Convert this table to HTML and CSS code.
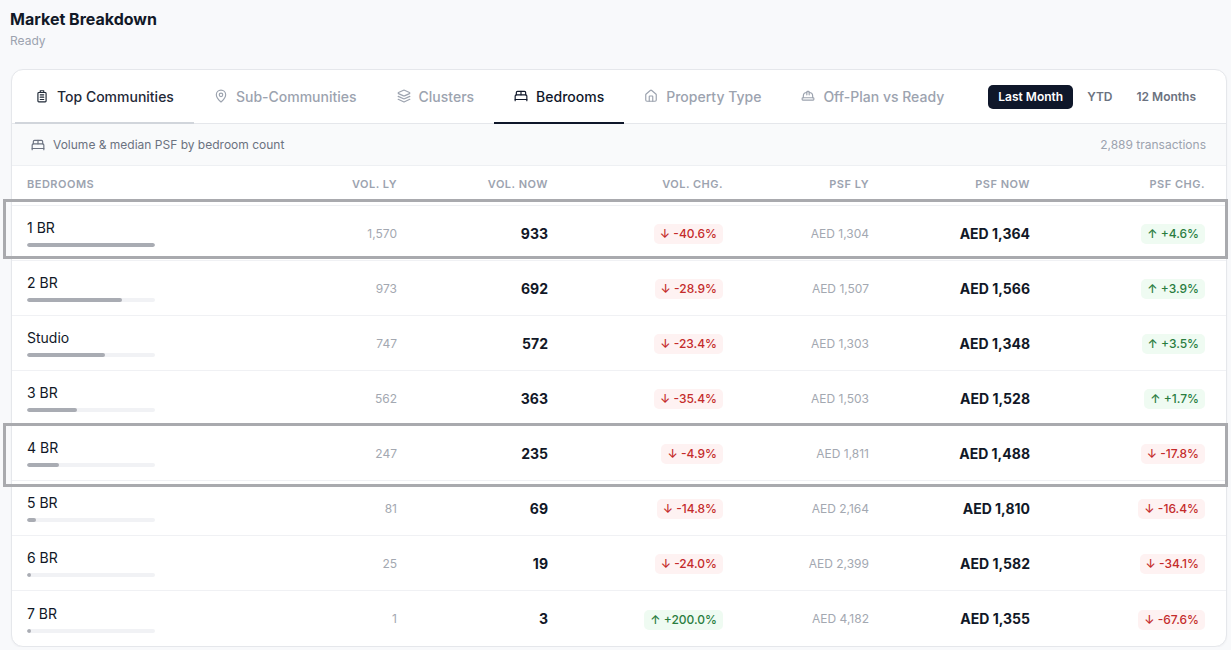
FILE: index.html
```html
<!DOCTYPE html>
<html lang="en">
<head>
<meta charset="utf-8">
<title>Market Breakdown</title>
<link rel="stylesheet" href="styles.css">
</head>
<body>
<div class="page">
  <header class="page-head">
    <h1 class="title">Market Breakdown</h1>
    <div class="status">Ready</div>
  </header>

  <section class="card">
    <div class="tabbar">
      <nav class="tabs">
        <div class="tab tab-hover">
          <svg class="ico" viewBox="0 0 24 24"><rect x="5" y="6" width="14" height="16" rx="1.5"/><path d="M9 6V3h6v3"/><path d="M9 10h6M9 14h6M9 18h6"/></svg>
          <span>Top Communities</span>
        </div>
        <div class="tab">
          <svg class="ico" viewBox="0 0 24 24"><path d="M20 10c0 4.993-5.539 10.193-7.399 11.799a1 1 0 0 1-1.202 0C9.539 20.193 4 14.993 4 10a8 8 0 0 1 16 0"/><circle cx="12" cy="10" r="3"/></svg>
          <span>Sub-Communities</span>
        </div>
        <div class="tab">
          <svg class="ico" viewBox="0 0 24 24"><path d="m12.83 2.18a2 2 0 0 0-1.66 0L2.6 6.08a1 1 0 0 0 0 1.83l8.58 3.910a2 2 0 0 0 1.66 0l8.58-3.9a1 1 0 0 0 0-1.83Z"/><path d="m22 17.65-9.17 4.16a2 2 0 0 1-1.66 0L2 17.65"/><path d="m22 12.65-9.17 4.16a2 2 0 0 1-1.66 0L2 12.65"/></svg>
          <span>Clusters</span>
        </div>
        <div class="tab active">
          <svg class="ico" viewBox="0 0 24 24"><path d="M2 20v-8a2 2 0 0 1 2-2h16a2 2 0 0 1 2 2v8"/><path d="M4 10V6a2 2 0 0 1 2-2h12a2 2 0 0 1 2 2v4"/><path d="M12 4v6"/><path d="M2 18h20"/></svg>
          <span>Bedrooms</span>
        </div>
        <div class="tab">
          <svg class="ico" viewBox="0 0 24 24"><path d="M15 21v-8a1 1 0 0 0-1-1h-4a1 1 0 0 0-1 1v8"/><path d="M3 10a2 2 0 0 1 .709-1.528l7-5.999a2 2 0 0 1 2.582 0l7 5.999A2 2 0 0 1 21 10v9a2 2 0 0 1-2 2H5a2 2 0 0 1-2-2z"/></svg>
          <span>Property Type</span>
        </div>
        <div class="tab">
          <svg class="ico" viewBox="0 0 24 24"><path d="M2 18a1 1 0 0 0 1 1h18a1 1 0 0 0 1-1v-2a1 1 0 0 0-1-1H3a1 1 0 0 0-1 1v2z"/><path d="M10 10V5a1 1 0 0 1 1-1h2a1 1 0 0 1 1 1v5"/><path d="M4 15v-3a6 6 0 0 1 6-6"/><path d="M14 6a6 6 0 0 1 6 6v3"/></svg>
          <span>Off-Plan vs Ready</span>
        </div>
      </nav>
      <div class="periods">
        <button class="period on">Last Month</button>
        <button class="period">YTD</button>
        <button class="period">12 Months</button>
      </div>
    </div>

    <div class="subhead">
      <div class="subhead-left">
        <svg class="ico small" viewBox="0 0 24 24"><path d="M2 20v-8a2 2 0 0 1 2-2h16a2 2 0 0 1 2 2v8"/><path d="M4 10V6a2 2 0 0 1 2-2h12a2 2 0 0 1 2 2v4"/><path d="M12 4v6"/><path d="M2 18h20"/></svg>
        <span>Volume &amp; median PSF by bedroom count</span>
      </div>
      <div class="subhead-right">2,889 transactions</div>
    </div>

    <div class="table">
      <div class="row head">
        <div class="c-name">Bedrooms</div>
        <div class="num">Vol. LY</div>
        <div class="num">Vol. Now</div>
        <div class="num">Vol. Chg.</div>
        <div class="num">PSF LY</div>
        <div class="num">PSF Now</div>
        <div class="num">PSF Chg.</div>
      </div>

      <div class="row mark mark-a">
        <div class="c-name"><div class="name">1 BR</div><div class="bar"><div class="fill" style="width:100%"></div></div></div>
        <div class="num ly">1,570</div>
        <div class="num now">933</div>
        <div class="num"><span class="badge down">↓ -40.6%</span></div>
        <div class="num ly">AED 1,304</div>
        <div class="num now">AED 1,364</div>
        <div class="num"><span class="badge up">↑ +4.6%</span></div>
      </div>

      <div class="row">
        <div class="c-name"><div class="name">2 BR</div><div class="bar"><div class="fill" style="width:74.2%"></div></div></div>
        <div class="num ly">973</div>
        <div class="num now">692</div>
        <div class="num"><span class="badge down">↓ -28.9%</span></div>
        <div class="num ly">AED 1,507</div>
        <div class="num now">AED 1,566</div>
        <div class="num"><span class="badge up">↑ +3.9%</span></div>
      </div>

      <div class="row">
        <div class="c-name"><div class="name">Studio</div><div class="bar"><div class="fill" style="width:61.3%"></div></div></div>
        <div class="num ly">747</div>
        <div class="num now">572</div>
        <div class="num"><span class="badge down">↓ -23.4%</span></div>
        <div class="num ly">AED 1,303</div>
        <div class="num now">AED 1,348</div>
        <div class="num"><span class="badge up">↑ +3.5%</span></div>
      </div>

      <div class="row">
        <div class="c-name"><div class="name">3 BR</div><div class="bar"><div class="fill" style="width:38.9%"></div></div></div>
        <div class="num ly">562</div>
        <div class="num now">363</div>
        <div class="num"><span class="badge down">↓ -35.4%</span></div>
        <div class="num ly">AED 1,503</div>
        <div class="num now">AED 1,528</div>
        <div class="num"><span class="badge up">↑ +1.7%</span></div>
      </div>

      <div class="row mark mark-b">
        <div class="c-name"><div class="name">4 BR</div><div class="bar"><div class="fill" style="width:25.2%"></div></div></div>
        <div class="num ly">247</div>
        <div class="num now">235</div>
        <div class="num"><span class="badge down">↓ -4.9%</span></div>
        <div class="num ly">AED 1,811</div>
        <div class="num now">AED 1,488</div>
        <div class="num"><span class="badge down">↓ -17.8%</span></div>
      </div>

      <div class="row">
        <div class="c-name"><div class="name">5 BR</div><div class="bar"><div class="fill" style="width:7.4%"></div></div></div>
        <div class="num ly">81</div>
        <div class="num now">69</div>
        <div class="num"><span class="badge down">↓ -14.8%</span></div>
        <div class="num ly">AED 2,164</div>
        <div class="num now">AED 1,810</div>
        <div class="num"><span class="badge down">↓ -16.4%</span></div>
      </div>

      <div class="row">
        <div class="c-name"><div class="name">6 BR</div><div class="bar"><div class="fill" style="width:2%"></div></div></div>
        <div class="num ly">25</div>
        <div class="num now">19</div>
        <div class="num"><span class="badge down">↓ -24.0%</span></div>
        <div class="num ly">AED 2,399</div>
        <div class="num now">AED 1,582</div>
        <div class="num"><span class="badge down">↓ -34.1%</span></div>
      </div>

      <div class="row last">
        <div class="c-name"><div class="name">7 BR</div><div class="bar"><div class="fill" style="width:0.3%"></div></div></div>
        <div class="num ly">1</div>
        <div class="num now">3</div>
        <div class="num"><span class="badge up">↑ +200.0%</span></div>
        <div class="num ly">AED 4,182</div>
        <div class="num now">AED 1,355</div>
        <div class="num"><span class="badge down">↓ -67.6%</span></div>
      </div>
    </div>
  </section>
</div>
</body>
</html>
```

FILE: styles.css
```css
* { box-sizing: border-box; }

html, body {
  margin: 0;
  padding: 0;
  background: #f8f9fb;
  font-family: Inter, "Noto Sans", "Liberation Sans", sans-serif;
  color: #111827;
}

.page {
  padding: 9px 4px 0 11px;
}

.page-head {
  margin-left: -1px;
}

.title {
  margin: 0;
  font-size: 16px;
  line-height: 20px;
  font-weight: 700;
  color: #111827;
}

.status {
  margin-top: 4px;
  font-size: 12px;
  line-height: 16px;
  color: #9ca3af;
}

.card {
  margin-top: 20px;
  background: #fff;
  border: 1px solid #e5e7eb;
  border-radius: 12px;
  box-shadow: 0 1px 2px rgba(16, 24, 40, 0.04);
  height: 578px;
}

/* tabs */
.tabbar {
  display: flex;
  align-items: stretch;
  justify-content: space-between;
  height: 54px;
  border-bottom: 1px solid #e5e7eb;
  padding: 0 20px 0 3px;
}

.tabs {
  display: flex;
  align-items: stretch;
}

.tab {
  flex: none;
  display: flex;
  align-items: center;
  gap: 8px;
  padding: 0 20px;
  font-size: 14px;
  font-weight: 500;
  white-space: nowrap;
  color: #9ca3af;
  border-bottom: 2px solid transparent;
  margin-bottom: -1px;
}

.tab-hover {
  color: #1f2937;
  border-bottom-color: #d1d5db;
}

.tab.active {
  color: #0f172a;
  border-bottom-color: #0f172a;
}

.ico {
  width: 14px;
  height: 14px;
  fill: none;
  stroke: currentColor;
  stroke-width: 2;
  stroke-linecap: round;
  stroke-linejoin: round;
  flex: none;
}

.ico.small {
  color: #6b7280;
}

.periods {
  flex: none;
  display: flex;
  align-items: center;
  gap: 4px;
}

.period {
  font-family: inherit;
  font-size: 12px;
  font-weight: 600;
  white-space: nowrap;
  color: #6b7280;
  background: transparent;
  border: 0;
  border-radius: 5px;
  height: 24px;
  padding: 0 10px;
  cursor: pointer;
}

.period.on {
  background: #0f172a;
  color: #fff;
}

/* subheader */
.subhead {
  display: flex;
  align-items: center;
  justify-content: space-between;
  height: 42px;
  background: #f9fafb;
  border-bottom: 1px solid #eef0f3;
  padding: 0 20px 0 19px;
  font-size: 12px;
}

.subhead-left {
  display: flex;
  align-items: center;
  gap: 8px;
  color: #6b7280;
}

.subhead-right {
  color: #9ca3af;
}

/* table */
.row {
  display: grid;
  grid-template-columns: 220px 150px 151px 175px 146px 161px 175px;
  align-items: center;
  padding: 0 20px 0 15px;
  height: 55px;
  border-bottom: 1px solid #f0f1f4;
  position: relative;
}

.row.last { border-bottom: 0; }

.row.head {
  height: 40px;
  padding-bottom: 3px;
  font-size: 11px;
  font-weight: 600;
  letter-spacing: 0.5px;
  text-transform: uppercase;
  color: #9ca3af;
  border-bottom-color: #eef0f3;
}

.num {
  text-align: right;
}

.name {
  font-size: 14px;
  line-height: 18px;
  color: #111827;
}

.bar {
  margin-top: 6px;
  width: 128px;
  height: 4px;
  border-radius: 2px;
  background: #f1f2f5;
  overflow: hidden;
}

.fill {
  height: 100%;
  min-width: 4px;
  border-radius: 2px;
  background: #a9acb3;
}

.ly {
  font-size: 12px;
  color: #a3a8b1;
}

.now {
  font-size: 14px;
  font-weight: 700;
  color: #111827;
}

.badge {
  display: inline-block;
  height: 20px;
  line-height: 20px;
  padding: 0 6px;
  border-radius: 5px;
  font-size: 12px;
  font-weight: 500;
}

.badge.down {
  background: #fef2f2;
  color: #c42b2b;
}

.badge.up {
  background: #effbf2;
  color: #2a7d3f;
}

/* annotation frames over flagged rows */
.mark::after {
  content: "";
  position: absolute;
  left: -9px;
  right: -2px;
  border: 3px solid #a9aaae;
  pointer-events: none;
}

.mark-a::after { top: -7px; bottom: 1px; }
.mark-b::after { top: -3px; bottom: -7px; }
```
